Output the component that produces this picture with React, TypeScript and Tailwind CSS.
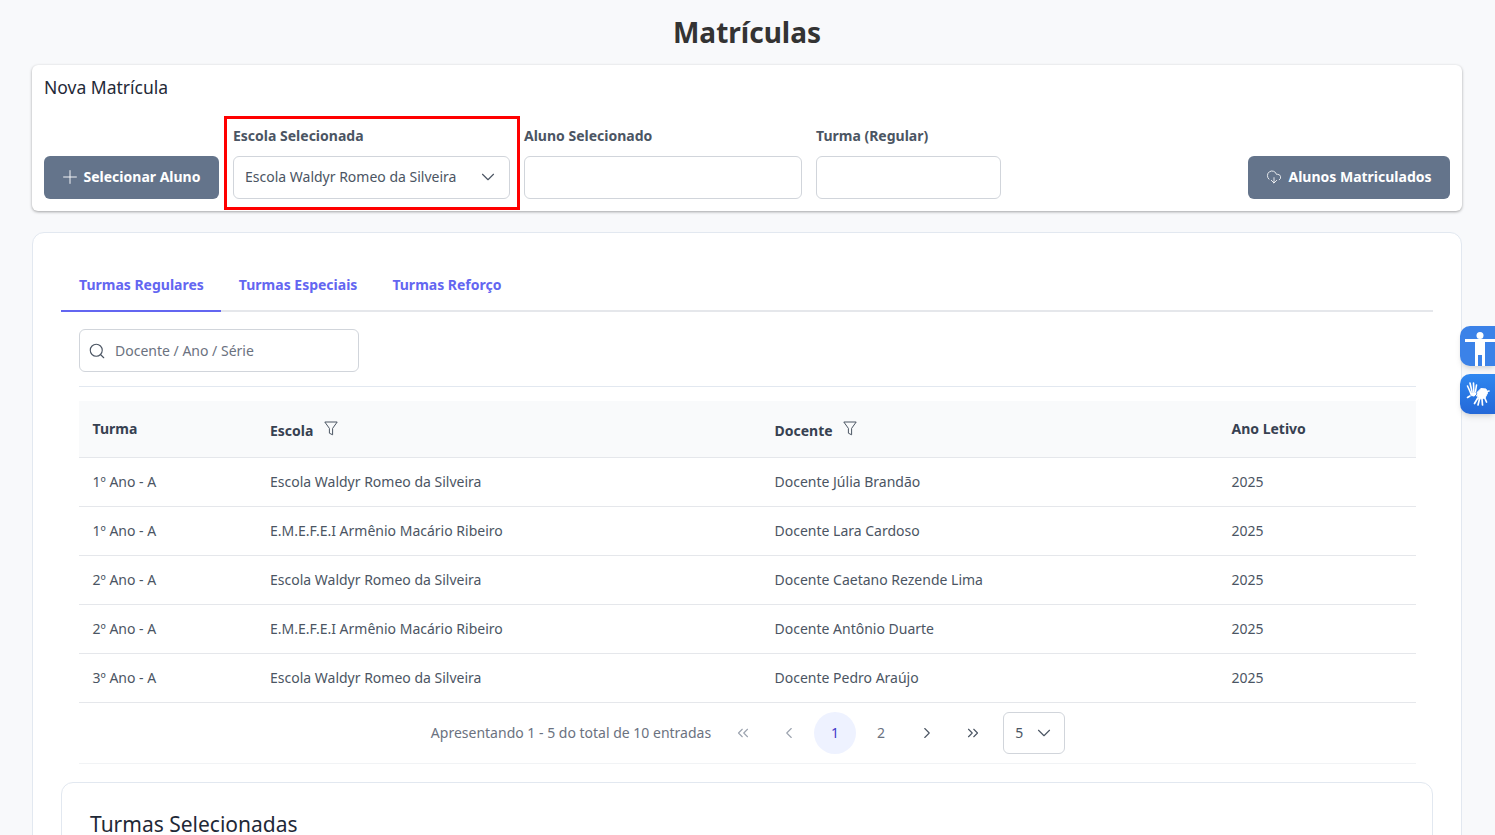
import {
  ChevronDown,
  ChevronLeft,
  ChevronRight,
  ChevronsLeft,
  ChevronsRight,
  CloudDownload,
  Plus,
  Search,
} from "lucide-react";

const rows = [
  { turma: "1º Ano - A", escola: "Escola Waldyr Romeo da Silveira", docente: "Docente Júlia Brandão" },
  { turma: "1º Ano - A", escola: "E.M.E.F.E.I Armênio Macário Ribeiro", docente: "Docente Lara Cardoso" },
  { turma: "2º Ano - A", escola: "Escola Waldyr Romeo da Silveira", docente: "Docente Caetano Rezende Lima" },
  { turma: "2º Ano - A", escola: "E.M.E.F.E.I Armênio Macário Ribeiro", docente: "Docente Antônio Duarte" },
  { turma: "3º Ano - A", escola: "Escola Waldyr Romeo da Silveira", docente: "Docente Pedro Araújo" },
];

const Field = ({ label, width, children }: { label: string; width: string; children?: React.ReactNode }) => (
  <div className={`flex flex-col ${width}`}>
    <label className="mb-[10px] h-[21px] text-[14px] leading-[21px] font-bold text-[#4b5563]">{label}</label>
    <div className="flex h-[43px] items-center justify-between rounded-md border border-[#d1d5db] bg-white pr-[10px] pb-[2px] pl-[11px] text-[14px] text-[#4b5563]">
      {children}
    </div>
  </div>
);

const PageButton = ({ children, active }: { children: React.ReactNode; active?: boolean }) => (
  <button
    className={`flex h-[42px] w-[42px] items-center justify-center rounded-full text-[14px] ${
      active ? "bg-[#eef2ff] text-[#4338ca]" : "text-[#6b7280]"
    }`}
  >
    {children}
  </button>
);

const FilterIcon = () => (
  <svg width="14" height="15" viewBox="0 0 14 15" fill="none" stroke="#4b5563" strokeWidth="1" strokeLinejoin="round">
    <path d="M.8 1h12.4L8.6 7.4v6.4l-3.2-1.6V7.4z" />
  </svg>
);

const HandsIcon = () => (
  <svg width="24" height="24" viewBox="0 0 24 24" fill="none" stroke="white" strokeLinecap="round">
    <path d="M10 11.5 15 6.5l5 .5 1.5 4-2.5 5-6 1z" fill="white" stroke="white" strokeWidth="1" />
    <g strokeWidth="1.7">
      <path d="M11.5 16.5 8.5 21.5" />
      <path d="M13.5 17 12 23" />
      <path d="M16 17 16.5 23" />
      <path d="M18.5 15.5 20.5 20" />
      <path d="M20.5 9.5 23 9" />
    </g>
    <path d="M3.5 10 9.5 9.5 11 12l-3 3-3.5-1z" fill="white" stroke="#2f7ee8" strokeWidth="0.8" />
    <g strokeWidth="1.6">
      <path d="M4.5 10.5 1.5 4" />
      <path d="M6 9.5 4 1" />
      <path d="M7.8 9.5 7.5 1" />
      <path d="M9.5 9.5 10.5 3" />
      <path d="M4 14 1.5 15.5" />
    </g>
  </svg>
);

const AccessibilityButtons = () => (
  <div className="absolute top-[326px] right-0 flex w-[35px] flex-col gap-2">
    <div className="h-[40px] overflow-hidden rounded-l-[10px] bg-[#3b82e8] shadow-md">
      <svg width="35" height="40" viewBox="0 0 35 40" fill="white">
        <circle cx="20" cy="9.5" r="3.5" />
        <path d="M5 13h30v3H25v24h-3V29h-4v11h-3V16H5z" />
      </svg>
    </div>
    <div className="flex h-[40px] items-center justify-center rounded-l-[10px] bg-gradient-to-b from-[#2f87f0] to-[#2468d8] shadow-md">
      <HandsIcon />
    </div>
  </div>
);

export default function App() {
  return (
    <div className="relative h-[835px] overflow-hidden bg-[#f8f9fb] pr-[33px] pl-[32px] font-['Noto_Sans',sans-serif]">
      <h1 className="h-[65px] pt-[11px] text-center text-[28px] leading-[42px] font-bold text-[#333333]">Matrículas</h1>

      <section className="h-[146px] rounded-md bg-white px-[12px] pt-[9px] shadow-[0_1px_3px_rgba(0,0,0,0.35)]">
        <h2 className="h-[26px] text-[17.5px] leading-[26px] text-[#1f2937]">Nova Matrícula</h2>
        <div className="mt-[25px] flex items-end justify-between">
          <div className="flex items-end gap-[14px]">
            <button className="flex h-[43px] w-[175px] items-center justify-center gap-[3px] rounded-md bg-[#64748b] pr-[4px] pb-[2px] text-[14px] font-bold text-white">
              <Plus size={22} strokeWidth={1} />
              Selecionar Aluno
            </button>
            <div className="relative">
              <Field label="Escola Selecionada" width="w-[277px]">
                <span>Escola Waldyr Romeo da Silveira</span>
                <ChevronDown size={22} strokeWidth={1.25} />
              </Field>
              <div className="absolute -top-[9px] -right-[10px] -bottom-[11px] -left-[9px] border-[3px] border-[#ff0000]" />
            </div>
            <Field label="Aluno Selecionado" width="w-[278px]" />
            <Field label="Turma (Regular)" width="w-[185px]" />
          </div>
          <button className="flex h-[43px] w-[202px] items-center justify-center gap-[6px] rounded-md bg-[#64748b] pb-[2px] text-[14px] font-bold text-white">
            <CloudDownload size={16} strokeWidth={1.25} />
            Alunos Matriculados
          </button>
        </div>
      </section>

      <section className="mt-[21px] h-[700px] rounded-xl border border-[#e2e8f0] bg-white px-[28px] pt-[29px]">
        <div className="flex h-[50px] border-b-2 border-[#e5e7eb] text-[14px] font-bold text-[#6366f1]">
          <div className="-mb-[2px] flex h-[50px] items-center border-b-2 border-[#6366f1] pr-[17px] pb-[4px] pl-[18px]">Turmas Regulares</div>
          <div className="flex items-center px-[18px] pb-[4px]">Turmas Especiais</div>
          <div className="flex items-center px-[17px] pb-[4px]">Turmas Reforço</div>
        </div>

        <div className="mr-[17px] ml-[18px]">
          <div className="border-b border-[#e2e8f0] pt-[17px] pb-[14px]">
            <div className="flex h-[43px] w-[280px] items-center gap-[9px] rounded-md border border-[#d1d5db] pl-[8px] text-[14px] text-[#6b7280]">
              <Search size={18} strokeWidth={1.5} className="text-[#4b5563]" />
              Docente / Ano / Série
            </div>
          </div>

          <table className="mt-[14px] w-full table-fixed text-left text-[14px] text-[#4b5563]">
            <colgroup>
              <col className="w-[177px]" />
              <col className="w-[505px]" />
              <col className="w-[457px]" />
              <col />
            </colgroup>
            <thead>
              <tr className="h-[56px] border-b border-[#e5e7eb] bg-[#f9fafb] font-bold text-[#374151]">
                <th className="pl-[13.5px]">Turma</th>
                <th className="pl-[14px]">
                  <span className="flex items-center gap-[11px]">
                    <span className="mt-[3px]">Escola</span>
                    <FilterIcon />
                  </span>
                </th>
                <th className="pl-[13.5px]">
                  <span className="flex items-center gap-[10px]">
                    <span className="mt-[3px]">Docente</span>
                    <FilterIcon />
                  </span>
                </th>
                <th className="pl-[13.5px]">Ano Letivo</th>
              </tr>
            </thead>
            <tbody>
              {rows.map((row, i) => (
                <tr key={i} className="h-[49px] border-b border-[#e5e7eb]">
                  <td className="pl-[13.5px]">{row.turma}</td>
                  <td className="pl-[14px]">{row.escola}</td>
                  <td className="pl-[13.5px]">{row.docente}</td>
                  <td className="pl-[13.5px]">2025</td>
                </tr>
              ))}
            </tbody>
          </table>

          <div className="flex h-[61px] items-center justify-center border-b border-[#f1f3f5] pl-[1px] text-[14px] text-[#6b7280]">
            <span className="mr-[11px]">Apresentando 1 - 5 do total de 10 entradas</span>
            <div className="flex gap-[4px]">
              <PageButton><ChevronsLeft size={18} strokeWidth={1.5} className="text-[#9ca3af]" /></PageButton>
              <PageButton><ChevronLeft size={18} strokeWidth={1.5} className="text-[#9ca3af]" /></PageButton>
              <PageButton active>1</PageButton>
              <PageButton>2</PageButton>
              <PageButton><ChevronRight size={18} strokeWidth={1.5} className="text-[#4b5563]" /></PageButton>
              <PageButton><ChevronsRight size={18} strokeWidth={1.5} className="text-[#4b5563]" /></PageButton>
            </div>
            <div className="ml-[9px] flex h-[42px] w-[62px] items-center justify-between rounded-md border border-[#d1d5db] pr-[9px] pl-[11px] text-[#4b5563]">
              5
              <ChevronDown size={22} strokeWidth={1.25} />
            </div>
          </div>
        </div>

        <div className="mt-[18px] h-[200px] rounded-xl border border-[#e2e8f0] px-[28px] pt-[26px]">
          <h2 className="text-[21px] leading-[30px] text-[#1f2937]">Turmas Selecionadas</h2>
        </div>
      </section>

      <AccessibilityButtons />
    </div>
  );
}
